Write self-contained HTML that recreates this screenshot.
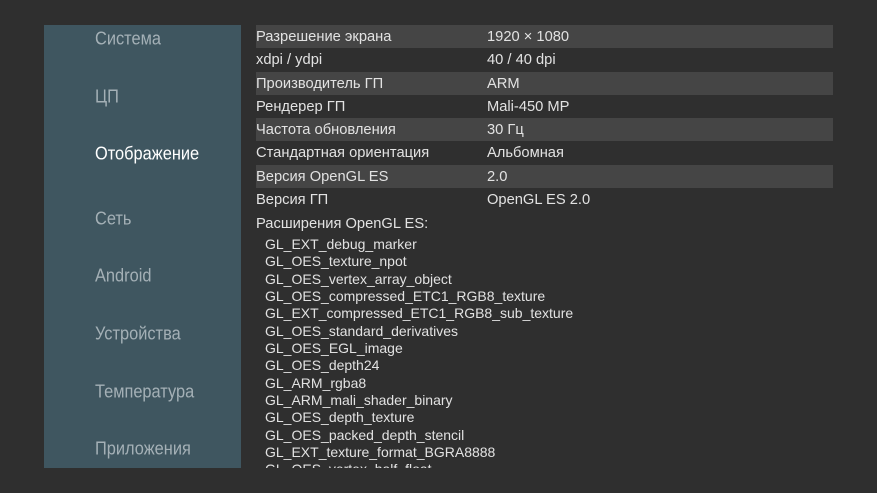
<!DOCTYPE html><html><head><style>
body{margin:0;width:877px;height:493px;background:#2f2f2f;overflow:hidden;font-family:"Liberation Sans",sans-serif;position:relative}
.side{position:absolute;left:44px;top:25px;width:197px;height:443px;background:#3f5660}
.nav{position:absolute;left:95px;font-size:18px;color:#a4b0b6;transform:translateY(-45%) scaleX(0.91);transform-origin:left center;white-space:nowrap}
.nav.a{color:#fff}
.tbl{position:absolute;left:256px;top:25px;width:577px}
.r{height:23.3px;line-height:25px;font-size:14.7px;color:#e2e2e2;position:relative}
.r:nth-child(odd){background:#454545}
.r span{position:absolute;left:231px}
.ext{position:absolute;left:256px;top:214px;height:254px;overflow:hidden;font-size:14px;color:#e2e2e2;line-height:17.35px;width:600px}
.ext p{font-size:14.7px}
.ext div{padding-left:9px}
</style></head><body>
<div class="side"></div>
<div class="nav" style="top:38px">Система</div>
<div class="nav" style="top:96px">ЦП</div>
<div class="nav a" style="top:153px">Отображение</div>
<div class="nav" style="top:218px">Сеть</div>
<div class="nav" style="top:275px">Android</div>
<div class="nav" style="top:333px">Устройства</div>
<div class="nav" style="top:391px">Температура</div>
<div class="nav" style="top:448px">Приложения</div>
<div class="tbl">
<div class="r">Разрешение экрана<span>1920 × 1080</span></div>
<div class="r">xdpi / ydpi<span>40 / 40 dpi</span></div>
<div class="r">Производитель ГП<span>ARM</span></div>
<div class="r">Рендерер ГП<span>Mali-450 MP</span></div>
<div class="r">Частота обновления<span>30 Гц</span></div>
<div class="r">Стандартная ориентация<span>Альбомная</span></div>
<div class="r">Версия OpenGL ES<span>2.0</span></div>
<div class="r">Версия ГП<span>OpenGL ES 2.0</span></div>
</div>
<div class="ext">
<p style="margin:0;line-height:20px">Расширения OpenGL ES:</p>
<div style="margin-top:2px">GL_EXT_debug_marker</div>
<div>GL_OES_texture_npot</div>
<div>GL_OES_vertex_array_object</div>
<div>GL_OES_compressed_ETC1_RGB8_texture</div>
<div>GL_EXT_compressed_ETC1_RGB8_sub_texture</div>
<div>GL_OES_standard_derivatives</div>
<div>GL_OES_EGL_image</div>
<div>GL_OES_depth24</div>
<div>GL_ARM_rgba8</div>
<div>GL_ARM_mali_shader_binary</div>
<div>GL_OES_depth_texture</div>
<div>GL_OES_packed_depth_stencil</div>
<div>GL_EXT_texture_format_BGRA8888</div>
<div>GL_OES_vertex_half_float</div>
</div>
</body></html>
